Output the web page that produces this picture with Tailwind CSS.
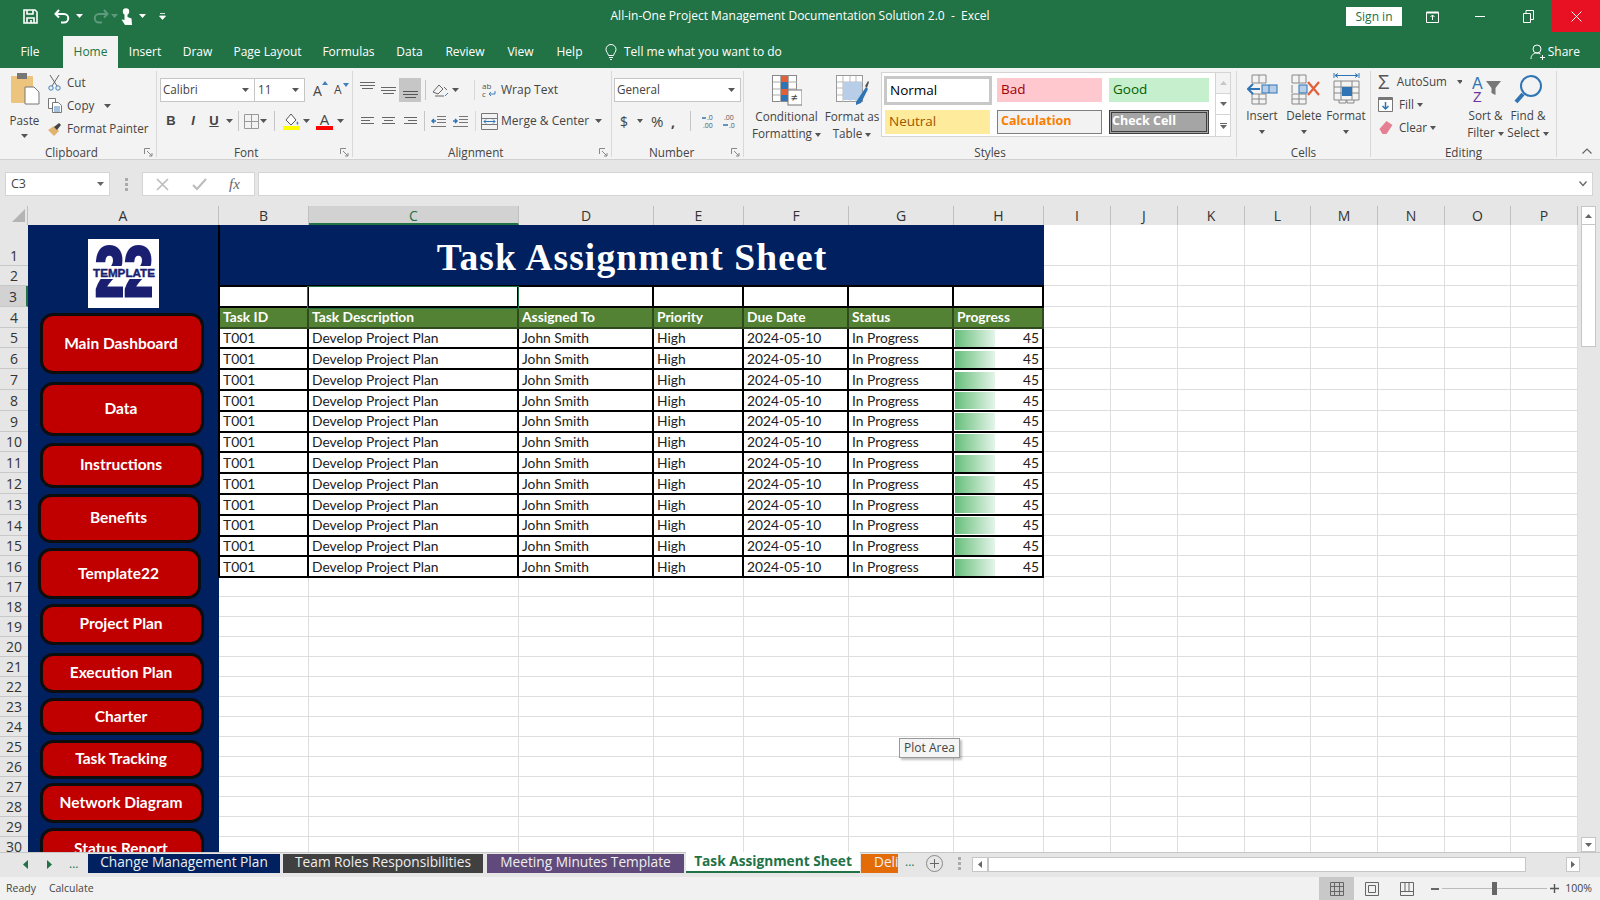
<!DOCTYPE html>
<html><head><meta charset="utf-8"><script src="https://cdn.jsdelivr.net/npm/@tailwindcss/browser@4"></script><title>Excel</title></head>
<body class="w-[1600px] h-[900px] overflow-hidden flex flex-col bg-[#e6e6e6] font-['Open_Sans',sans-serif] text-[11.7px] text-[#444]">
<!-- title bar -->
<header class="h-[36px] bg-[#217346] grid grid-cols-[1fr_auto_1fr] text-white shrink-0">
 <div class="flex items-center h-[32px] pl-[23px]">
  <svg width="15" height="15" viewBox="0 0 15 15" fill="none" stroke="#fff" stroke-width="1.6"><path d="M1 1h11l2 2v11H1z"/><path d="M4 1v4h6V1M4 14V9h7v5"/><path d="M8 11v3" /></svg>
  <svg class="ml-[16px]" width="16" height="15" viewBox="0 0 16 15" fill="none" stroke="#fff" stroke-width="2"><path d="M5 1L1.500 5 5 8.500"/><path d="M2 5h8a4 4 0 0 1 0 8.500H7"/></svg>
  <svg class="ml-[6px]" width="7" height="4"><path d="M0 0h7L3.500 4z" fill="#fff"/></svg>
  <svg class="ml-[10px]" width="16" height="15" viewBox="0 0 16 15" fill="none" stroke="#5f9a7c" stroke-width="2"><path d="M11 1l3.500 4L11 8.500"/><path d="M14 5H6a4 4 0 0 0 0 8.500h3"/></svg>
  <svg class="ml-[2px]" width="7" height="4"><path d="M0 0h7L3.500 4z" fill="#5f9a7c"/></svg>
  <svg class="ml-[3px]" width="12" height="17" viewBox="0 0 12 17" fill="#fff"><circle cx="5" cy="3.500" r="3.200"/><path d="M3.500 4h3v5l4 1.500L11 17H4L0.500 11.500 3.500 12z"/></svg>
  <svg class="ml-[6px]" width="7" height="4"><path d="M0 0h7L3.500 4z" fill="#fff"/></svg>
  <svg class="ml-[13px]" width="7" height="7"><path d="M1 0.500h5M0.500 3h6l-3 3.500z" stroke="#fff" stroke-width="0.800" fill="#fff"/></svg>
 </div>
 <div class="h-[32px] flex items-center text-[12px] whitespace-pre">All-in-One Project Management Documentation Solution 2.0  -  Excel</div>
 <div class="flex items-start justify-end">
  <div class="mt-[7px] w-[56px] h-[19px] bg-white text-[#217346] text-[12px] flex items-center justify-center">Sign in</div>
  <div class="w-[54px] pl-[6px] h-[32px] flex items-center justify-center"><svg width="13" height="13" viewBox="0 0 13 13" fill="none" stroke="#fff"><path d="M.5 2.500h12v10H.5z"/><path d="M.5 2.500h12" stroke-width="2"/><path d="M6.500 10V5M4.500 7l2-2 2 2"/></svg></div>
  <div class="w-[48px] h-[32px] flex items-center justify-center"><span class="w-[10px] h-[1px] bg-white"></span></div>
  <div class="w-[48px] h-[32px] flex items-center justify-center"><svg width="11" height="13" viewBox="0 0 11 13" fill="none" stroke="#fff"><path d="M.5 3.500h7v9h-7z"/><path d="M3 3V.5h7.500v9H8"/></svg></div>
  <div class="w-[48px] h-[32px] bg-[#e81123] flex items-center justify-center"><svg width="11" height="11" stroke="#fff"><path d="M.5.5l10 10M10.500.5l-10 10"/></svg></div>
 </div>
</header>
<!-- ribbon tabs -->
<nav class="h-[32px] bg-[#217346] flex text-white text-[12px] shrink-0">
 <div class="w-[60px] flex items-center justify-center">File</div>
 <div class="ml-[3px] w-[55px] bg-[#f3f3f3] text-[#217346] flex items-center justify-center">Home</div>
 <div class="w-[54px] flex items-center justify-center">Insert</div>
 <div class="w-[51px] flex items-center justify-center">Draw</div>
 <div class="w-[89px] flex items-center justify-center">Page Layout</div>
 <div class="w-[73px] flex items-center justify-center">Formulas</div>
 <div class="w-[49px] flex items-center justify-center">Data</div>
 <div class="w-[62px] flex items-center justify-center">Review</div>
 <div class="w-[49px] flex items-center justify-center">View</div>
 <div class="w-[49px] flex items-center justify-center">Help</div>
 <div class="ml-[11px] flex items-center gap-[7px]">
  <svg width="12" height="17" viewBox="0 0 12 17" fill="none" stroke="#fff"><path d="M3.500 11.500C3 9 1 8 1 5.500a5 5 0 0 1 10 0c0 2.500-2 3.500-2.500 6z"/><path d="M4 13.500h4M5 15.500h2"/></svg>
  <span>Tell me what you want to do</span>
 </div>
 <div class="ml-auto mr-[20px] flex items-center gap-[2px]">
  <svg width="16" height="17" viewBox="0 0 16 17" fill="none" stroke="#fff"><circle cx="7" cy="5" r="4"/><path d="M1 15c0-4 2.500-6 6-6 1.500 0 2.500.4 3.500 1"/><path d="M12.500 11v5M10 13.500h5"/></svg>
  <span>Share</span>
 </div>
</nav>
<!-- ribbon -->
<div class="h-[92px] bg-[#f3f3f3] border-b border-[#d0d0d0] flex shrink-0 relative">
 <!-- Clipboard -->
 <section class="w-[157px] h-[86px] mt-[3px] border-r border-[#d8d8d8] flex flex-col">
  <div class="h-[73px] flex">
   <div class="w-[48px] flex flex-col items-center pl-[1px]">
    <svg class="mt-[2px]" width="30" height="32" viewBox="0 0 30 32"><rect x="1" y="3" width="22" height="27" rx="1" fill="#edc47e"/><rect x="7" y="0" width="10" height="6" fill="#777"/><path d="M15 14h9l5 5v12H15z" fill="#fff" stroke="#777"/></svg>
    <span class="mt-[7px] leading-[16px]">Paste</span>
    <svg class="mt-[6px]" width="7" height="4"><path d="M0 0h7L3.500 4z" fill="#555"/></svg>
   </div>
   <div class="flex flex-col [&>div]:h-[23px] [&>div]:flex [&>div]:items-center">
    <div class="gap-[6px]"><svg width="13" height="16" viewBox="0 0 13 16" fill="none" stroke="#666"><path d="M2 0l7 11M11 0L4 11"/><circle cx="3" cy="13" r="2.200" stroke="#3f7fbf"/><circle cx="10" cy="13" r="2.200" stroke="#3f7fbf"/></svg><span>Cut</span></div>
    <div class="gap-[5px]"><svg width="14" height="15" viewBox="0 0 14 15" fill="#fff" stroke="#777"><path d="M.5.5h7v10h-7z"/><path d="M4.500 4.500h6l3 3v7h-9z"/><path d="M6 9h6M6 11h6M6 13h6" stroke="#4a86c0" fill="none"/></svg><span>Copy</span><svg class="ml-[5px]" width="7" height="4"><path d="M0 0h7L3.500 4z" fill="#555"/></svg></div>
    <div class="gap-[5px]"><svg width="14" height="14" viewBox="0 0 14 14"><path d="M0 8l6-4 5 5-5 5z" fill="#e0b36e"/><path d="M6 5l5-4 2 2-4 5z" fill="#444"/></svg><span class="whitespace-nowrap">Format Painter</span></div>
   </div>
  </div>
  <div class="h-[13px] leading-[16px] flex justify-between pr-[3px] pl-[45px]"><span>Clipboard</span><svg class="mt-[4px]" width="9" height="9" fill="none" stroke="#888"><path d="M.5 6V.5H6"/><path d="M3 3l5 5M8 5v3H5"/></svg></div>
 </section>
 <!-- Font -->
 <section class="w-[196px] h-[86px] mt-[3px] border-r border-[#d8d8d8] flex flex-col">
  <div class="h-[73px] flex flex-col">
   <div class="flex mt-[7px] ml-[3px] items-center">
    <div class="w-[95px] h-[24px] bg-white border border-[#c6c6c6] flex items-center justify-between px-[2px] pr-[5px]"><span>Calibri</span><svg width="7" height="4"><path d="M0 0h7L3.500 4z" fill="#555"/></svg></div>
    <div class="w-[50px] h-[24px] bg-white border border-l-0 border-[#c6c6c6] flex items-center justify-between px-[3px] pr-[5px]"><span>11</span><svg width="7" height="4"><path d="M0 0h7L3.500 4z" fill="#555"/></svg></div>
    <span class="ml-[8px] text-[14px] w-[21px] relative">A<svg class="absolute top-[1px] left-[9px]" width="6" height="4"><path d="M3 0l3 4H0z" fill="#3f7fbf"/></svg></span>
    <span class="text-[12px] w-[9px]">A</span><svg class="mb-[10px]" width="6" height="4"><path d="M0 0h6L3 4z" fill="#3f7fbf"/></svg>
   </div>
   <div class="flex mt-[8px] items-center h-[22px] pl-[3px]">
    <span class="w-[22px] text-center font-bold text-[13px] font-['Liberation_Sans']">B</span>
    <span class="w-[22px] text-center italic font-bold text-[13px] font-['Liberation_Sans']">I</span>
    <span class="w-[20px] text-center underline font-bold text-[13px] font-['Liberation_Sans']">U</span>
    <svg class="ml-[2px]" width="7" height="4"><path d="M0 0h7L3.500 4z" fill="#555"/></svg>
    <span class="ml-[5px] w-[1px] h-[20px] bg-[#c6c6c6]"></span>
    <svg class="ml-[5px]" width="15" height="15" fill="none" stroke="#999"><path d="M.5.5h14v14H.5zM7.500.5v14M.5 7.500h14"/></svg>
    <svg class="ml-[1px]" width="7" height="4"><path d="M0 0h7L3.500 4z" fill="#555"/></svg>
    <span class="ml-[7px] w-[1px] h-[20px] bg-[#c6c6c6]"></span>
    <svg class="ml-[8px]" width="17" height="18" viewBox="0 0 17 18"><path d="M3 8l5-6 5 6-5 5z" fill="#fff" stroke="#555"/><path d="M14 9c1 1.500 2 2 1 3.500-1 .5-2-.5-1-3.500z" fill="#3f7fbf"/><rect y="14" width="17" height="4" fill="#ffff00"/></svg>
    <svg class="ml-[3px]" width="7" height="4"><path d="M0 0h7L3.500 4z" fill="#555"/></svg>
    <span class="ml-[6px] w-[17px] relative flex flex-col items-center leading-[14px] text-[15px] border-b-[4px] border-[#ff0000] h-[18px]">A</span>
    <svg class="ml-[4px]" width="7" height="4"><path d="M0 0h7L3.500 4z" fill="#555"/></svg>
   </div>
  </div>
  <div class="h-[13px] leading-[16px] flex justify-between pr-[3px] pl-[77px]"><span>Font</span><svg class="mt-[4px]" width="9" height="9" fill="none" stroke="#888"><path d="M.5 6V.5H6"/><path d="M3 3l5 5M8 5v3H5"/></svg></div>
 </section>
 <!-- Alignment -->
 <section class="w-[259px] h-[86px] mt-[3px] border-r border-[#d8d8d8] flex flex-col">
  <div class="h-[73px] flex flex-col">
   <div class="flex mt-[7px] ml-[4px] items-center h-[24px]">
    <div class="w-[21px] h-[24px] flex justify-center items-start pt-[3px]"><svg width="15" height="9" stroke="#666"><path d="M0 1.500h15M0 4.500h15M2 7.500h11" /></svg></div>
    <div class="w-[21px] h-[24px] flex justify-center items-center"><svg width="15" height="9" stroke="#666"><path d="M0 1.500h15M0 4.500h15M2 7.500h11"/></svg></div>
    <div class="w-[22px] h-[24px] bg-[#c6c6c6] flex justify-center items-end pb-[3px]"><svg width="15" height="9" stroke="#555"><path d="M0 1.500h15M0 4.500h15M2 7.500h11"/></svg></div>
    <span class="ml-[4px] w-[1px] h-[20px] bg-[#c6c6c6]"></span>
    <svg class="ml-[6px]" width="17" height="15" viewBox="0 0 17 15" fill="none" stroke="#666"><path d="M1 9l6-7 4 4-5 5zM12 4l3 3M3 13h9" /><path d="M13 13l3-3" stroke="#3f7fbf"/></svg>
    <svg class="ml-[3px]" width="7" height="4"><path d="M0 0h7L3.500 4z" fill="#555"/></svg>
    <span class="ml-[15px] w-[1px] h-[20px] bg-[#d8d8d8]"></span>
    <svg class="ml-[7px]" width="15" height="17" viewBox="0 0 15 17"><text x="0" y="7" font-size="8" fill="#555">ab</text><text x="0" y="15" font-size="8" fill="#555">c</text><path d="M13 9v3H7M9 10l-2 2 2 2" fill="none" stroke="#3f7fbf"/></svg>
    <span class="ml-[4px] whitespace-nowrap text-[12px]">Wrap Text</span>
   </div>
   <div class="flex mt-[7px] ml-[4px] items-center h-[24px]">
    <div class="w-[21px] flex justify-center"><svg width="13" height="10" stroke="#666"><path d="M0 1.500h13M0 4.500h9M0 7.500h13"/></svg></div>
    <div class="w-[21px] flex justify-center"><svg width="13" height="10" stroke="#666"><path d="M0 1.500h13M2 4.500h9M0 7.500h13"/></svg></div>
    <div class="w-[22px] flex justify-center"><svg width="13" height="10" stroke="#666"><path d="M0 1.500h13M4 4.500h9M0 7.500h13"/></svg></div>
    <span class="ml-[3px] w-[1px] h-[20px] bg-[#c6c6c6]"></span>
    <div class="ml-[3px] w-[21px] flex justify-center"><svg width="15" height="13" fill="none" stroke="#777"><path d="M6 1.500h9M6 4.500h9M6 7.500h9M0 11.500h15"/><path d="M5 6H1M3 4L1 6l2 2" stroke="#2f75b5" stroke-width="1.500"/></svg></div>
    <div class="w-[22px] flex justify-center"><svg width="15" height="13" fill="none" stroke="#777"><path d="M6 1.500h9M6 4.500h9M6 7.500h9M0 11.500h15"/><path d="M0 6h4M2 4l2 2-2 2" stroke="#2f75b5" stroke-width="1.500"/></svg></div>
    <span class="ml-[4px] w-[1px] h-[20px] bg-[#d8d8d8]"></span>
    <svg class="ml-[5px]" width="17" height="17" fill="none" stroke="#777"><path d="M.5.5h16v16H.5zM.5 5.500h16M.5 11.500h16"/><path d="M3 8.500h11M5 6.500l-2 2 2 2M12 6.500l2 2-2 2" stroke="#2f75b5"/></svg>
    <span class="ml-[3px] whitespace-nowrap text-[12px]">Merge &amp; Center</span>
    <svg class="ml-[6px]" width="7" height="4"><path d="M0 0h7L3.500 4z" fill="#555"/></svg>
   </div>
  </div>
  <div class="h-[13px] leading-[16px] flex justify-between pr-[3px] pl-[95px]"><span>Alignment</span><svg class="mt-[4px]" width="9" height="9" fill="none" stroke="#888"><path d="M.5 6V.5H6"/><path d="M3 3l5 5M8 5v3H5"/></svg></div>
 </section>
 <!-- Number -->
 <section class="w-[132px] h-[86px] mt-[3px] border-r border-[#d8d8d8] flex flex-col">
  <div class="h-[73px] flex flex-col">
   <div class="mt-[7px] ml-[2px] w-[127px] h-[24px] bg-white border border-[#c6c6c6] flex items-center justify-between px-[2px] pr-[5px]"><span>General</span><svg width="7" height="4"><path d="M0 0h7L3.500 4z" fill="#555"/></svg></div>
   <div class="flex mt-[7px] items-center h-[24px] pl-[8px] text-[14px]">
    <span class="w-[10px]">$</span>
    <svg class="ml-[7px]" width="6" height="4"><path d="M0 0h6L3 4z" fill="#555"/></svg>
    <span class="ml-[8px] w-[16px] text-[15px]">%</span>
    <span class="ml-[4px] w-[6px] font-bold">,</span>
    <span class="ml-[13px] w-[1px] h-[20px] bg-[#c6c6c6]"></span>
    <svg class="ml-[11px]" width="14" height="15" viewBox="0 0 14 15"><text x="5" y="6" font-size="7" fill="#555">.0</text><text x="1" y="14" font-size="7" fill="#555">.00</text><path d="M0 4h4" stroke="#2f75b5" stroke-width="1.500"/></svg>
    <svg class="ml-[7px]" width="14" height="15" viewBox="0 0 14 15"><text x="1" y="6" font-size="7" fill="#555">.00</text><text x="6" y="14" font-size="7" fill="#555">.0</text><path d="M0 11h5" stroke="#2f75b5" stroke-width="1.500"/></svg>
   </div>
  </div>
  <div class="h-[13px] leading-[16px] flex justify-between pr-[3px] pl-[37px]"><span>Number</span><svg class="mt-[4px]" width="9" height="9" fill="none" stroke="#888"><path d="M.5 6V.5H6"/><path d="M3 3l5 5M8 5v3H5"/></svg></div>
 </section>
 <!-- Styles -->
 <section class="w-[493px] h-[86px] mt-[3px] border-r border-[#d8d8d8] flex flex-col">
  <div class="h-[73px] flex">
   <div class="w-[79px] flex flex-col items-center pl-[6px] text-center leading-[17px]">
    <svg class="mt-[4px] mb-[2px]" width="30" height="31" viewBox="0 0 30 31"><rect x=".5" y=".5" width="24" height="26" fill="#fff" stroke="#888"/><path d="M8.500 1v26M16.500 1v26M1 7h24M1 14h24M1 20h24" stroke="#aaa"/><rect x="9" y="1" width="7" height="6" fill="#e0603a"/><rect x="9" y="7" width="7" height="7" fill="#2f75b5"/><rect x="9" y="14" width="7" height="6" fill="#e0603a"/><rect x="9" y="20" width="7" height="6" fill="#2f75b5"/><rect x="16" y="15" width="14" height="15" fill="#fff" stroke="#777"/><text x="19" y="27" font-size="12" fill="#444">≠</text></svg>
    <span class="whitespace-nowrap">Conditional</span><span class="whitespace-nowrap">Formatting <svg class="inline" width="6" height="4"><path d="M0 0h6L3 4z" fill="#555"/></svg></span>
   </div>
   <div class="w-[58px] flex flex-col items-center text-center leading-[17px]">
    <svg class="mt-[4px] mb-[2px]" width="34" height="31" viewBox="0 0 34 31"><rect x="1.500" y=".5" width="26" height="26" fill="#fff" stroke="#999"/><path d="M8 1v26M15 1v26M21 1v26M2 7h26M2 13h26M2 20h26" stroke="#bbb"/><rect x="8" y="7" width="19" height="18" fill="#b7cde8"/><path d="M21 27l10-15 2 2-7 14-5 2z" fill="#2f75b5"/><path d="M30 11l3-5 1 1-2 6z" fill="#555"/></svg>
    <span class="whitespace-nowrap">Format as</span><span class="whitespace-nowrap">Table <svg class="inline" width="6" height="4"><path d="M0 0h6L3 4z" fill="#555"/></svg></span>
   </div>
   <div class="w-[350px] h-[65px] mt-[1px] bg-white border border-[#d4d4d4] flex">
    <div class="w-[333px] grid grid-cols-[112px_111px_104px] grid-rows-[33px_31px] text-[13.500px]">
     <div class="flex items-center"><span class="ml-[2px] mt-[1px] w-[108px] h-[29px] border-[3px] border-[#c8c8c8] bg-white text-black flex items-center pl-[3px]">Normal</span></div>
     <div class="flex items-center"><span class="ml-[3px] w-[105px] h-[24px] bg-[#ffc7ce] text-[#9c0006] flex items-center pl-[4px]">Bad</span></div>
     <div class="flex items-center"><span class="ml-[4px] w-[104px] h-[24px] bg-[#c6efce] text-[#006100] flex items-center pl-[4px]">Good</span></div>
     <div class="flex items-center"><span class="ml-[3px] w-[105px] h-[24px] bg-[#ffeb9c] text-[#9c5700] flex items-center pl-[4px]">Neutral</span></div>
     <div class="flex items-center"><span class="ml-[3px] w-[105px] h-[24px] bg-[#f2f2f2] border border-[#7f7f7f] text-[#fa7d00] text-[12.500px] font-bold flex items-center pl-[3px]">Calculation</span></div>
     <div class="flex items-center"><span class="ml-[4px] w-[104px] h-[24px] bg-[#a5a5a5] border-[3px] border-double border-[#3f3f3f] text-white text-[12.500px] font-bold flex items-center whitespace-nowrap">Check Cell</span></div>
    </div>
    <div class="w-[15px] flex flex-col border-l border-[#d4d4d4] bg-[#f3f3f3]">
     <div class="h-[21px] flex items-center justify-center border-b border-[#d4d4d4]"><svg width="7" height="4"><path d="M0 4h7L3.500 0z" fill="#c6c6c6"/></svg></div>
     <div class="h-[21px] bg-white flex items-center justify-center border-b border-[#d4d4d4]"><svg width="7" height="4"><path d="M0 0h7L3.500 4z" fill="#666"/></svg></div>
     <div class="h-[21px] bg-white flex flex-col gap-[1px] items-center justify-center"><span class="w-[7px] h-[1px] bg-[#666]"></span><svg width="7" height="4"><path d="M0 0h7L3.500 4z" fill="#666"/></svg></div>
    </div>
   </div>
  </div>
  <div class="h-[13px] leading-[16px] text-center">Styles</div>
 </section>
 <!-- Cells -->
 <section class="w-[134px] h-[86px] mt-[3px] border-r border-[#d8d8d8] flex flex-col">
  <div class="h-[73px] flex pl-[4px] [&>div]:w-[42px] [&>div]:flex [&>div]:flex-col [&>div]:items-center">
   <div><svg class="mt-[3px] mb-[2px]" width="31" height="31" viewBox="0 0 31 31" fill="none" stroke="#888"><path d="M5 1h14v8H5zM12 1v8M5 20h14v10H5zM12 20v10M5 25h14"/><rect x="15" y="11" width="15" height="8" fill="#b7cde8" stroke="#2f75b5"/><path d="M22 11v8" stroke="#2f75b5"/><path d="M13 15H1M6 10l-5 5 5 5" stroke="#2f75b5" stroke-width="2"/></svg><span class="leading-[17px]">Insert</span><svg class="mt-[6px]" width="6" height="4"><path d="M0 0h6L3 4z" fill="#555"/></svg></div>
   <div><svg class="mt-[3px] mb-[2px]" width="31" height="31" viewBox="0 0 31 31" fill="none" stroke="#888"><path d="M3 1h14v8H3zM10 1v8M3 20h14v10H3zM10 20v10M3 25h14M3 11v8"/><rect x="10" y="11" width="8" height="8" fill="#b7cde8" stroke="#2f75b5"/><path d="M19 8l11 13M30 8L19 21" stroke="#e0603a" stroke-width="2.200"/></svg><span class="leading-[17px]">Delete</span><svg class="mt-[6px]" width="6" height="4"><path d="M0 0h6L3 4z" fill="#555"/></svg></div>
   <div><svg class="mt-[1px] mb-[2px]" width="31" height="33" viewBox="0 0 31 33" fill="none" stroke="#888"><path d="M3 1v5M28 1v5M4 3.500h23M7 1.500l-3 2 3 2M24 1.500l3 2-3 2" stroke="#2f75b5"/><path d="M3 9h25v19H3zM3 15h25M3 21h25M10 9v19M21 9v19M8 28v3h7v-3M16 28v3h7v-3"/><rect x="11" y="15" width="10" height="9" fill="#2f75b5" stroke="none"/></svg><span class="leading-[17px]">Format</span><svg class="mt-[6px]" width="6" height="4"><path d="M0 0h6L3 4z" fill="#555"/></svg></div>
  </div>
  <div class="h-[13px] leading-[16px] text-center">Cells</div>
 </section>
 <!-- Editing -->
 <section class="w-[186px] h-[86px] mt-[3px] border-r border-[#d8d8d8] flex flex-col">
  <div class="h-[73px] flex">
   <div class="w-[91px] flex flex-col pl-[7px] -mt-[1px] [&>div]:h-[23px] [&>div]:flex [&>div]:items-center [&>div]:gap-[6px]">
    <div><span class="w-[15px] text-[20px] leading-[20px] text-[#555]">Σ</span><span class="whitespace-nowrap">AutoSum</span><svg class="ml-[4px]" width="6" height="4"><path d="M0 0h6L3 4z" fill="#555"/></svg></div>
    <div><svg width="15" height="15" fill="#fff" stroke="#777"><path d="M.5.5h14v14H.5z"/><path d="M.5 2h14" stroke-width="2"/><path d="M7.500 5v7M4.500 9l3 3 3-3" stroke="#2f75b5" stroke-width="1.500" fill="none"/></svg><span>Fill</span><svg class="ml-[-3px]" width="6" height="4"><path d="M0 0h6L3 4z" fill="#555"/></svg></div>
    <div><svg width="15" height="13" viewBox="0 0 14 13"><path d="M1 8l7-8 6 4-6 9H4z" fill="#e57f92"/></svg><span>Clear</span><svg class="ml-[-3px]" width="6" height="4"><path d="M0 0h6L3 4z" fill="#555"/></svg></div>
   </div>
   <div class="w-[47px] flex flex-col items-center leading-[17px]">
    <svg class="mt-[4px] mb-[1px]" width="30" height="31" viewBox="0 0 30 31"><text x="1" y="14" font-size="16" fill="#2f75b5" font-family="Liberation Sans">A</text><text x="2" y="27" font-size="14" fill="#7030a0" font-family="Liberation Sans">Z</text><path d="M15 6h15l-5.500 7v7l-4-2v-5z" fill="#777"/></svg>
    <span class="whitespace-nowrap">Sort &amp;</span><span class="whitespace-nowrap">Filter <svg class="inline" width="6" height="4"><path d="M0 0h6L3 4z" fill="#555"/></svg></span>
   </div>
   <div class="w-[38px] flex flex-col items-center leading-[17px]">
    <svg class="mt-[3px] mb-[2px] shrink-0" width="30" height="31" viewBox="0 0 30 31" fill="none" stroke="#2f75b5"><circle cx="18" cy="12" r="10" stroke-width="2"/><path d="M10 20L3 28" stroke-width="4"/></svg>
    <span class="whitespace-nowrap">Find &amp;</span><span class="whitespace-nowrap">Select <svg class="inline" width="6" height="4"><path d="M0 0h6L3 4z" fill="#555"/></svg></span>
   </div>
  </div>
  <div class="h-[13px] leading-[16px] text-center">Editing</div>
 </section>
 <svg class="ml-[25px] mt-[80px]" width="10" height="6" fill="none" stroke="#666" stroke-width="1.200"><path d="M.5 5.500L5 1l4.500 4.500"/></svg>
</div>
<!-- formula bar -->
<div class="h-[46px] flex pt-[12px] shrink-0">
 <div class="ml-[5px] w-[105px] h-[24px] bg-white border border-[#d4d4d4] flex items-center justify-between pl-[5px] pr-[5px] text-[12.500px]"><span>C3</span><svg width="7" height="4"><path d="M0 0h7L3.500 4z" fill="#666"/></svg></div>
 <div class="w-[32px] h-[24px] flex justify-center items-center"><span class="w-[3px] h-[13px] border-l-[3px] border-dotted border-[#aaa]"></span></div>
 <div class="w-[113px] h-[24px] bg-white border border-[#d4d4d4] flex items-center justify-around pr-[3px] pl-[2px]">
  <svg width="13" height="13" stroke="#bbb" stroke-width="1.600"><path d="M1 1l11 11M12 1L1 12"/></svg>
  <svg width="15" height="13" stroke="#bbb" stroke-width="2" fill="none"><path d="M1 7l4 4 9-10"/></svg>
  <span class="font-['Liberation_Serif'] italic text-[15px] text-[#666]">fx</span>
 </div>
 <div class="ml-[3px] w-[1335px] h-[24px] bg-white border border-[#d4d4d4] flex items-center justify-end pr-[5px]"><svg width="8" height="6" fill="none" stroke="#666" stroke-width="1.300"><path d="M.5.5L4 4.500 7.500.5"/></svg></div>
</div>
<!-- sheet -->
<div class="h-[646px] flex shrink-0 overflow-hidden relative font-['Lato',sans-serif] text-[13.800px] text-[#222]">
 <div class="w-[1580px] flex flex-col overflow-hidden shrink-0">
  <div class="h-[19px] flex shrink-0 text-[#333] text-[14px] font-['Open_Sans'] leading-[20px] text-center [&>div]:border-r [&>div]:border-[#c0c0c0] [&>div]:h-[19px]">
   <div class="w-[28px] flex items-end justify-end pr-[2px] pb-[3px]"><svg width="13" height="13"><path d="M13 0v13H0z" fill="#b4b4b4"/></svg></div>
   <div class="w-[191px]">A</div><div class="w-[90px]">B</div>
   <div class="w-[210px] bg-[#d2d2d2] !border-b-2 !border-b-[#217346] text-[#217346]">C</div>
   <div class="w-[135px]">D</div><div class="w-[90px]">E</div><div class="w-[105px]">F</div><div class="w-[105px]">G</div><div class="w-[90px]">H</div>
   <div class="w-[67px]">I</div><div class="w-[67px]">J</div><div class="w-[67px]">K</div><div class="w-[66px]">L</div><div class="w-[67px]">M</div><div class="w-[67px]">N</div><div class="w-[66px]">O</div><div class="w-[67px]">P</div>
  </div>
  <div class="flex flex-1 overflow-hidden">
   <!-- row headers -->
   <div class="w-[28px] shrink-0 grid grid-rows-[41px_20px_repeat(14,20.8px)_repeat(14,20px)] text-center text-[14px] font-['Open_Sans'] text-[#333] leading-[19px] [&>div]:border-b [&>div]:border-[#c8c8c8] [&>div]:flex [&>div]:items-end [&>div]:justify-center">
    <div>1</div><div>2</div><div class="bg-[#d2d2d2] !border-r-2 !border-r-[#217346]">3</div><div>4</div><div>5</div><div>6</div><div>7</div><div>8</div><div>9</div><div>10</div><div>11</div><div>12</div><div>13</div><div>14</div><div>15</div><div>16</div><div>17</div><div>18</div><div>19</div><div>20</div><div>21</div><div>22</div><div>23</div><div>24</div><div>25</div><div>26</div><div>27</div><div>28</div><div>29</div><div>30</div>
   </div>
   <!-- column A with logo and navigation shapes -->
   <div class="w-[191px] shrink-0 bg-[#002060] flex flex-col items-start text-white font-bold text-[15.500px] font-['Lato'] [&>div:not(:first-child)]:border-[3px] [&>div:not(:first-child)]:border-[#0d0d0d] [&>div:not(:first-child)]:bg-[#c00000] [&>div:not(:first-child)]:rounded-[13px] [&>div:not(:first-child)]:flex [&>div:not(:first-child)]:items-center [&>div:not(:first-child)]:justify-center [&>div:not(:first-child)]:shrink-0 [&>div:not(:first-child)]:pr-[2px]">
    <div class="mt-[14px] ml-[60px] w-[71px] h-[69px] bg-white shrink-0">
     <svg width="71" height="69" viewBox="0 0 71 69"><text x="36" y="57" text-anchor="middle" font-family="Liberation Sans" font-weight="700" font-size="71" textLength="58" lengthAdjust="spacingAndGlyphs" fill="#1a1f71" stroke="#1a1f71" stroke-width="3">22</text><rect x="0" y="27" width="71" height="13" fill="#fff"/><text x="36" y="37.500" text-anchor="middle" font-family="Liberation Sans" font-weight="700" font-size="11" textLength="62" lengthAdjust="spacingAndGlyphs" fill="#1a1f71" stroke="#1a1f71" stroke-width=".4">TEMPLATE</text></svg>
    </div>
    <div class="mt-[5px] ml-[12px] w-[164px] h-[61px]">Main Dashboard</div>
    <div class="mt-[8px] ml-[12px] w-[164px] h-[54px]">Data</div>
    <div class="mt-[7px] ml-[12px] w-[164px] h-[45px] pb-[2px]">Instructions</div>
    <div class="mt-[6px] ml-[10px] w-[163px] h-[49px] pb-[2px]">Benefits</div>
    <div class="mt-[5px] ml-[10px] w-[163px] h-[51px]">Template22</div>
    <div class="mt-[5px] ml-[12px] w-[164px] h-[41px] pb-[2px]">Project Plan</div>
    <div class="mt-[8px] ml-[12px] w-[164px] h-[40px]">Execution Plan</div>
    <div class="mt-[5px] ml-[12px] w-[164px] h-[37px]">Charter</div>
    <div class="mt-[5px] ml-[12px] w-[164px] h-[39px] pb-[2px]">Task Tracking</div>
    <div class="mt-[4px] ml-[12px] w-[164px] h-[40px]">Network Diagram</div>
    <div class="mt-[5px] ml-[12px] w-[164px] h-[39px] !items-start pt-[6px]">Status Report</div>
   </div>
   <!-- B to H -->
   <div class="w-[825px] shrink-0 flex flex-col">
    <div class="h-[60px] ml-[-1px] bg-[#002060] border-l-2 border-l-black text-white font-['Liberation_Serif'] font-bold text-[37.500px] tracking-[1.100px] flex items-center justify-center pt-[7px] shrink-0">Task Assignment Sheet</div>
    <div class="grid ml-[-1px] bg-white grid-cols-[89px_210px_135px_90px_105px_105px_90px] grid-rows-[repeat(14,20.8px)] border-l-2 border-t-2 border-black relative shrink-0 [&>div]:border-r-2 [&>div]:border-b-2 [&>div]:border-black [&>div]:flex [&>div]:items-center [&>div]:px-[3px] [&>div]:pt-[1px] [&>div]:whitespace-nowrap">
     <div></div><div></div><div></div><div></div><div></div><div></div><div></div>
     <div class="bg-[#548235] text-white font-bold !border-[#2f4a1e]">Task ID</div><div class="bg-[#548235] text-white font-bold !border-[#2f4a1e]">Task Description</div><div class="bg-[#548235] text-white font-bold !border-[#2f4a1e]">Assigned To</div><div class="bg-[#548235] text-white font-bold !border-[#2f4a1e]">Priority</div><div class="bg-[#548235] text-white font-bold !border-[#2f4a1e]">Due Date</div><div class="bg-[#548235] text-white font-bold !border-[#2f4a1e]">Status</div><div class="bg-[#548235] text-white font-bold !border-[#2f4a1e]">Progress</div>
     <div>T001</div><div>Develop Project Plan</div><div>John Smith</div><div>High</div><div>2024-05-10</div><div>In Progress</div><div class="!px-[1px]"><span class="w-[40px] h-[17px] bg-gradient-to-r from-[#63be7b] to-[#e4f4e9]"></span><span class="ml-auto mr-[2px]">45</span></div>
     <div>T001</div><div>Develop Project Plan</div><div>John Smith</div><div>High</div><div>2024-05-10</div><div>In Progress</div><div class="!px-[1px]"><span class="w-[40px] h-[17px] bg-gradient-to-r from-[#63be7b] to-[#e4f4e9]"></span><span class="ml-auto mr-[2px]">45</span></div>
     <div>T001</div><div>Develop Project Plan</div><div>John Smith</div><div>High</div><div>2024-05-10</div><div>In Progress</div><div class="!px-[1px]"><span class="w-[40px] h-[17px] bg-gradient-to-r from-[#63be7b] to-[#e4f4e9]"></span><span class="ml-auto mr-[2px]">45</span></div>
     <div>T001</div><div>Develop Project Plan</div><div>John Smith</div><div>High</div><div>2024-05-10</div><div>In Progress</div><div class="!px-[1px]"><span class="w-[40px] h-[17px] bg-gradient-to-r from-[#63be7b] to-[#e4f4e9]"></span><span class="ml-auto mr-[2px]">45</span></div>
     <div>T001</div><div>Develop Project Plan</div><div>John Smith</div><div>High</div><div>2024-05-10</div><div>In Progress</div><div class="!px-[1px]"><span class="w-[40px] h-[17px] bg-gradient-to-r from-[#63be7b] to-[#e4f4e9]"></span><span class="ml-auto mr-[2px]">45</span></div>
     <div>T001</div><div>Develop Project Plan</div><div>John Smith</div><div>High</div><div>2024-05-10</div><div>In Progress</div><div class="!px-[1px]"><span class="w-[40px] h-[17px] bg-gradient-to-r from-[#63be7b] to-[#e4f4e9]"></span><span class="ml-auto mr-[2px]">45</span></div>
     <div>T001</div><div>Develop Project Plan</div><div>John Smith</div><div>High</div><div>2024-05-10</div><div>In Progress</div><div class="!px-[1px]"><span class="w-[40px] h-[17px] bg-gradient-to-r from-[#63be7b] to-[#e4f4e9]"></span><span class="ml-auto mr-[2px]">45</span></div>
     <div>T001</div><div>Develop Project Plan</div><div>John Smith</div><div>High</div><div>2024-05-10</div><div>In Progress</div><div class="!px-[1px]"><span class="w-[40px] h-[17px] bg-gradient-to-r from-[#63be7b] to-[#e4f4e9]"></span><span class="ml-auto mr-[2px]">45</span></div>
     <div>T001</div><div>Develop Project Plan</div><div>John Smith</div><div>High</div><div>2024-05-10</div><div>In Progress</div><div class="!px-[1px]"><span class="w-[40px] h-[17px] bg-gradient-to-r from-[#63be7b] to-[#e4f4e9]"></span><span class="ml-auto mr-[2px]">45</span></div>
     <div>T001</div><div>Develop Project Plan</div><div>John Smith</div><div>High</div><div>2024-05-10</div><div>In Progress</div><div class="!px-[1px]"><span class="w-[40px] h-[17px] bg-gradient-to-r from-[#63be7b] to-[#e4f4e9]"></span><span class="ml-auto mr-[2px]">45</span></div>
     <div>T001</div><div>Develop Project Plan</div><div>John Smith</div><div>High</div><div>2024-05-10</div><div>In Progress</div><div class="!px-[1px]"><span class="w-[40px] h-[17px] bg-gradient-to-r from-[#63be7b] to-[#e4f4e9]"></span><span class="ml-auto mr-[2px]">45</span></div>
     <div>T001</div><div>Develop Project Plan</div><div>John Smith</div><div>High</div><div>2024-05-10</div><div>In Progress</div><div class="!px-[1px]"><span class="w-[40px] h-[17px] bg-gradient-to-r from-[#63be7b] to-[#e4f4e9]"></span><span class="ml-auto mr-[2px]">45</span></div>
     <span class="absolute left-[87px] top-[-1px] w-[212px] h-[23px] border border-[#217346]"></span>
    </div>
    <div class="grid -mt-[1px] grid-cols-[90px_210px_135px_90px_105px_105px_90px] auto-rows-[20px] bg-white [&>div]:border-r [&>div]:border-b [&>div]:border-[#dedede]">
     <div></div><div></div><div></div><div></div><div></div><div></div><div></div>
     <div></div><div></div><div></div><div></div><div></div><div></div><div></div>
     <div></div><div></div><div></div><div></div><div></div><div></div><div></div>
     <div></div><div></div><div></div><div></div><div></div><div></div><div></div>
     <div></div><div></div><div></div><div></div><div></div><div></div><div></div>
     <div></div><div></div><div></div><div></div><div></div><div></div><div></div>
     <div></div><div></div><div></div><div></div><div></div><div></div><div></div>
     <div></div><div></div><div></div><div></div><div></div><div></div><div></div>
     <div></div><div></div><div></div><div></div><div></div><div></div><div></div>
     <div></div><div></div><div></div><div></div><div></div><div></div><div></div>
     <div></div><div></div><div></div><div></div><div></div><div></div><div></div>
     <div></div><div></div><div></div><div></div><div></div><div></div><div></div>
     <div></div><div></div><div></div><div></div><div></div><div></div><div></div>
     <div></div><div></div><div></div><div></div><div></div><div></div><div></div>
    </div>
   </div>
   <!-- I to P -->
   <div class="w-[534px] shrink-0 bg-white grid grid-cols-[67px_67px_67px_66px_67px_67px_66px_67px] grid-rows-[41px_20px_repeat(14,20.8px)_repeat(14,20px)] [&>div]:border-r [&>div]:border-b [&>div]:border-[#dedede]">
    <div></div><div></div><div></div><div></div><div></div><div></div><div></div><div></div>
    <div></div><div></div><div></div><div></div><div></div><div></div><div></div><div></div>
    <div></div><div></div><div></div><div></div><div></div><div></div><div></div><div></div>
    <div></div><div></div><div></div><div></div><div></div><div></div><div></div><div></div>
    <div></div><div></div><div></div><div></div><div></div><div></div><div></div><div></div>
    <div></div><div></div><div></div><div></div><div></div><div></div><div></div><div></div>
    <div></div><div></div><div></div><div></div><div></div><div></div><div></div><div></div>
    <div></div><div></div><div></div><div></div><div></div><div></div><div></div><div></div>
    <div></div><div></div><div></div><div></div><div></div><div></div><div></div><div></div>
    <div></div><div></div><div></div><div></div><div></div><div></div><div></div><div></div>
    <div></div><div></div><div></div><div></div><div></div><div></div><div></div><div></div>
    <div></div><div></div><div></div><div></div><div></div><div></div><div></div><div></div>
    <div></div><div></div><div></div><div></div><div></div><div></div><div></div><div></div>
    <div></div><div></div><div></div><div></div><div></div><div></div><div></div><div></div>
    <div></div><div></div><div></div><div></div><div></div><div></div><div></div><div></div>
    <div></div><div></div><div></div><div></div><div></div><div></div><div></div><div></div>
    <div></div><div></div><div></div><div></div><div></div><div></div><div></div><div></div>
    <div></div><div></div><div></div><div></div><div></div><div></div><div></div><div></div>
    <div></div><div></div><div></div><div></div><div></div><div></div><div></div><div></div>
    <div></div><div></div><div></div><div></div><div></div><div></div><div></div><div></div>
    <div></div><div></div><div></div><div></div><div></div><div></div><div></div><div></div>
    <div></div><div></div><div></div><div></div><div></div><div></div><div></div><div></div>
    <div></div><div></div><div></div><div></div><div></div><div></div><div></div><div></div>
    <div></div><div></div><div></div><div></div><div></div><div></div><div></div><div></div>
    <div></div><div></div><div></div><div></div><div></div><div></div><div></div><div></div>
    <div></div><div></div><div></div><div></div><div></div><div></div><div></div><div></div>
    <div></div><div></div><div></div><div></div><div></div><div></div><div></div><div></div>
    <div></div><div></div><div></div><div></div><div></div><div></div><div></div><div></div>
    <div></div><div></div><div></div><div></div><div></div><div></div><div></div><div></div>
    <div></div><div></div><div></div><div></div><div></div><div></div><div></div><div></div>
   </div>
  </div>
 </div>
 <!-- vertical scrollbar -->
 <div class="w-[20px] flex flex-col pl-[1px] pr-[4px]">
  <div class="h-[19px] bg-white border border-[#c6c6c6] flex items-center justify-center"><svg width="7" height="4"><path d="M0 4h7L3.500 0z" fill="#666"/></svg></div>
  <div class="h-[122px] bg-white border border-[#c6c6c6] border-t-0"></div>
  <div class="flex-1"></div>
  <div class="h-[15px] bg-white border border-[#c6c6c6] flex items-center justify-center"><svg width="7" height="4"><path d="M0 0h7L3.500 4z" fill="#666"/></svg></div>
 </div>
 <div class="absolute left-[899px] top-[532px] h-[20px] w-[61px] bg-[#f5f5f5] border border-[#999] shadow-[2px_2px_2px_rgba(0,0,0,0.25)] flex items-center justify-center text-[12px] text-[#444] font-['Open_Sans']">Plot Area</div>
</div>
<!-- sheet tabs -->
<div class="h-[25px] flex items-start shrink-0 border-t border-[#c6c6c6] text-[13.700px] text-[#eee] relative">
 <div class="w-[88px] h-[22px] flex items-center text-[#217346]">
  <svg class="ml-[23px]" width="5" height="9"><path d="M5 0v9L0 4.500z" fill="#217346"/></svg>
  <svg class="ml-[19px]" width="5" height="9"><path d="M0 0v9l5-4.500z" fill="#217346"/></svg>
  <span class="ml-[17px] text-[12px]">...</span>
 </div>
 <div class="mt-[1px] pb-[3px] w-[192px] h-[19px] bg-[#002060] flex items-center justify-center whitespace-nowrap">Change Management Plan</div>
 <div class="mt-[1px] pb-[3px] ml-[3px] w-[200px] h-[19px] bg-[#404040] flex items-center justify-center whitespace-nowrap">Team Roles Responsibilities</div>
 <div class="mt-[1px] pb-[3px] ml-[4px] w-[197px] h-[19px] bg-[#604a7b] flex items-center justify-center whitespace-nowrap">Meeting Minutes Template</div>
 <div class="ml-[2px] w-[174px] h-[21px] mt-[-1px] bg-white border-b-2 border-[#217346] text-[#217346] font-bold flex items-center justify-center whitespace-nowrap">Task Assignment Sheet</div>
 <div class="mt-[1px] pb-[3px] ml-[1px] w-[37px] h-[19px] bg-[#e36c09] pl-[13px] flex items-center overflow-hidden">Deli</div>
 <span class="ml-[7px] text-[12px] text-[#217346] leading-[18px]">...</span>
 <div class="ml-[12px] mt-[2px] w-[17px] h-[17px] rounded-full border border-[#888] flex items-center justify-center"><svg width="9" height="9" stroke="#666"><path d="M4.500 0v9M0 4.500h9"/></svg></div>
 <span class="ml-[15px] mt-[4px] w-[3px] h-[13px] border-l-[3px] border-dotted border-[#aaa]"></span>
 <div class="ml-[11px] mt-[4px] w-[16px] h-[15px] bg-white border border-[#c6c6c6] flex items-center justify-center"><svg width="4" height="7"><path d="M4 0v7L0 3.500z" fill="#666"/></svg></div>
 <div class="w-[538px] h-[15px] mt-[4px] bg-white border border-[#c6c6c6]"></div>
 <div class="w-[40px]"></div>
 <div class="w-[14px] h-[15px] mt-[4px] bg-white border border-[#c6c6c6] flex items-center justify-center"><svg width="4" height="7"><path d="M0 0v7l4-3.500z" fill="#666"/></svg></div>
</div>
<!-- status bar -->
<footer class="h-[23px] bg-[#f1f1f1] flex items-center text-[10.500px] text-[#444] shrink-0">
 <span class="ml-[6px]">Ready</span><span class="ml-[13px]">Calculate</span>
 <div class="ml-auto flex items-center">
  <div class="w-[35px] h-[23px] bg-[#c8c8c8] flex items-center justify-center"><svg width="14" height="14" fill="none" stroke="#666"><path d="M.5.5h13v13H.5zM4.500.5v13M9.500.5v13M.5 4.500h13M.5 9.500h13"/></svg></div>
  <div class="w-[35px] flex justify-center"><svg width="14" height="14" fill="none" stroke="#666"><path d="M.5.5h13v13H.5z"/><path d="M3.500 3.500h7v7h-7z"/></svg></div>
  <div class="w-[35px] flex justify-center"><svg width="14" height="14" fill="none" stroke="#666"><path d="M.5.5h13v13H.5zM.5 9.500h13M5 .5v9M9 .5v9"/></svg></div>
  <span class="ml-[7px] w-[8px] h-[2px] bg-[#666]"></span>
  <div class="ml-[3px] w-[105px] h-[1px] bg-[#bbb] relative"><span class="absolute left-[50px] top-[-6px] w-[5px] h-[13px] bg-[#666]"></span></div>
  <svg class="ml-[3px]" width="9" height="9" stroke="#555" stroke-width="1.400"><path d="M4.500 0v9M0 4.500h9"/></svg>
  <span class="ml-[6px] mr-[8px]">100%</span>
 </div>
</footer>
</body></html>
